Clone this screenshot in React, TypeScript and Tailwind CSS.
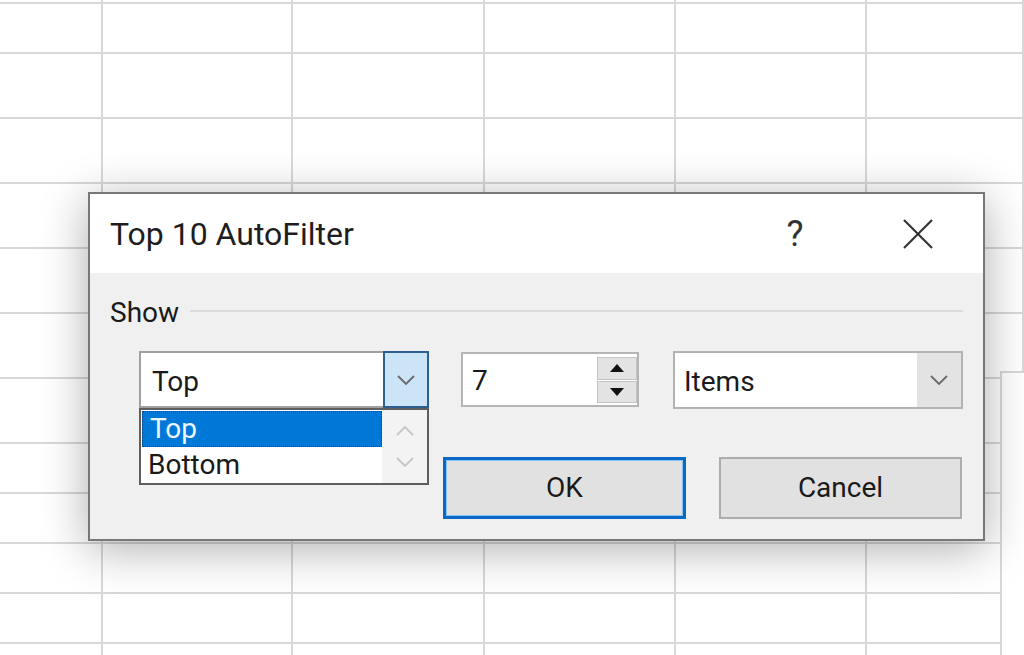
import React from "react";

const colW = ["w-[103px]", "w-[190px]", "w-[192px]", "w-[191px]", "w-[191px]", "w-auto"];
const rowH = [
  "h-[4px]",
  "h-[50px]",
  "h-[65px]",
  "h-[65px]",
  "h-[65px]",
  "h-[65px]",
  "h-[65px]",
  "h-[65px]",
  "h-[50px]",
  "h-[50px]",
  "h-[50px]",
  "h-[50px]",
  "h-[50px]",
];

function Chevron({ color = "#5f5f5f", up = false }: { color?: string; up?: boolean }) {
  return (
    <svg width="18" height="10" viewBox="0 0 18 10">
      <polyline
        points={up ? "1,9 9,1 17,9" : "1,1 9,9 17,1"}
        fill="none"
        stroke={color}
        strokeWidth="1.8"
      />
    </svg>
  );
}

function Sheet() {
  return (
    <div className="grid grid-cols-[103px_190px_192px_191px_191px_1fr] grid-rows-[4px_50px_65px_65px_65px_65px_65px_65px_50px_50px_50px_50px_50px] w-[1024px] h-[655px]">
      {rowH.map((_, r) =>
        colW.map((_, c) => (
          <div key={`${r}-${c}`} className="border-r-2 border-b-2 border-[#d8d8d8]" />
        ))
      )}
    </div>
  );
}

export default function App() {
  return (
    <div className="relative w-[1024px] h-[655px] overflow-hidden bg-white font-['Roboto',sans-serif] text-[#1a1a1a]">
      <Sheet />
      <div className="absolute left-[1000px] top-[371px] w-[24px] h-[284px] bg-white border-l-2 border-t-2 border-[#d8d8d8]" />

      <div className="absolute left-[88px] top-[192px] w-[897px] h-[349px] border-2 border-[#777777] bg-[#f0f0f0] shadow-[0_8px_44px_rgba(0,0,0,0.32)] flex flex-col">
        <div className="h-[79px] bg-white flex items-center pl-[20px] pr-[35px]">
          <span className="text-[32px] leading-none text-[#1e1e1e]">Top 10 AutoFilter</span>
          <div className="ml-auto w-[40px] text-center text-[36px] leading-none text-[#333]">?</div>
          <div className="ml-[73px] w-[60px] flex justify-center">
            <svg width="30" height="30" viewBox="0 0 30 30">
              <line x1="1" y1="1" x2="29" y2="29" stroke="#333" strokeWidth="2.2" />
              <line x1="29" y1="1" x2="1" y2="29" stroke="#333" strokeWidth="2.2" />
            </svg>
          </div>
        </div>

        <div className="flex-1 flex flex-col">
          <div className="mt-[26px] h-[28px] flex items-center pl-[20px] pr-[20px]">
            <span className="text-[28px] leading-none">Show</span>
            <div className="flex-1 h-[2px] bg-[#dcdcdc] ml-[11px] mb-[4px]" />
          </div>

          <div className="mt-[24px] flex items-start pl-[49px]">
            <div className="relative w-[290px] h-[57px] flex bg-white">
              <div className="flex-1 flex items-center pl-[11px] pt-[4px] border-2 border-r-0 border-[#a0a0a0] text-[28px] leading-none">
                Top
              </div>
              <div className="w-[46px] flex items-center justify-center bg-[#cce4f7] border-2 border-[#2d5f8f]">
                <Chevron color="#6a6a6a" />
              </div>
              <div className="absolute left-0 top-full w-[290px] h-[77px] border-2 border-[#5e5e5e] bg-white flex">
                <div className="flex-1 flex flex-col pt-[1px] pl-[1px]">
                  <div className="h-[36px] w-[240px] bg-[#0078d7] border border-dotted border-[#1b3f66] flex items-center pl-[7px] text-[28px] leading-none text-[#eef6ff]">
                    Top
                  </div>
                  <div className="h-[36px] flex items-center pl-[6px] text-[28px] leading-none">Bottom</div>
                </div>
                <div className="w-[45px] bg-[#f3f3f3] flex flex-col items-center justify-around py-[6px]">
                  <Chevron color="#c6c6c6" up />
                  <Chevron color="#c6c6c6" />
                </div>
              </div>
            </div>

            <div className="ml-[32px] mt-[1px] w-[178px] h-[55px] border-2 border-[#b5b5b5] bg-white flex py-[2px]">
              <div className="flex-1 flex items-center pl-[9px] pt-[2px] text-[28px] leading-none">7</div>
              <div className="w-[40px] flex flex-col gap-[1px] pt-[1px]">
                <div className="flex-1 bg-[#e3e3e3] border border-[#c4c4c4] flex items-center justify-center">
                  <svg width="14" height="8" viewBox="0 0 14 8">
                    <polygon points="7,0 14,8 0,8" fill="#111" />
                  </svg>
                </div>
                <div className="flex-1 bg-[#e3e3e3] border border-[#c4c4c4] flex items-center justify-center">
                  <svg width="14" height="8" viewBox="0 0 14 8">
                    <polygon points="0,0 14,0 7,8" fill="#111" />
                  </svg>
                </div>
              </div>
            </div>

            <div className="ml-[34px] w-[290px] h-[58px] border-2 border-[#b3b3b3] bg-white flex">
              <div className="flex-1 flex items-center pl-[9px] pt-[3px] text-[28px] leading-none">Items</div>
              <div className="w-[44px] bg-[#e3e3e3] flex items-center justify-center">
                <Chevron color="#6a6a6a" />
              </div>
            </div>
          </div>

          <div className="mt-[48px] flex pl-[353px]">
            <div className="w-[243px] h-[62px] border-[3px] border-[#0a68c8] shadow-[inset_0_0_0_1px_#8cc2f2] bg-[#e1e1e1] flex items-center justify-center text-[28px] leading-none">
              OK
            </div>
            <div className="ml-[33px] w-[243px] h-[62px] border-2 border-[#adadad] bg-[#e1e1e1] flex items-center justify-center text-[28px] leading-none">
              Cancel
            </div>
          </div>
        </div>
      </div>
    </div>
  );
}
